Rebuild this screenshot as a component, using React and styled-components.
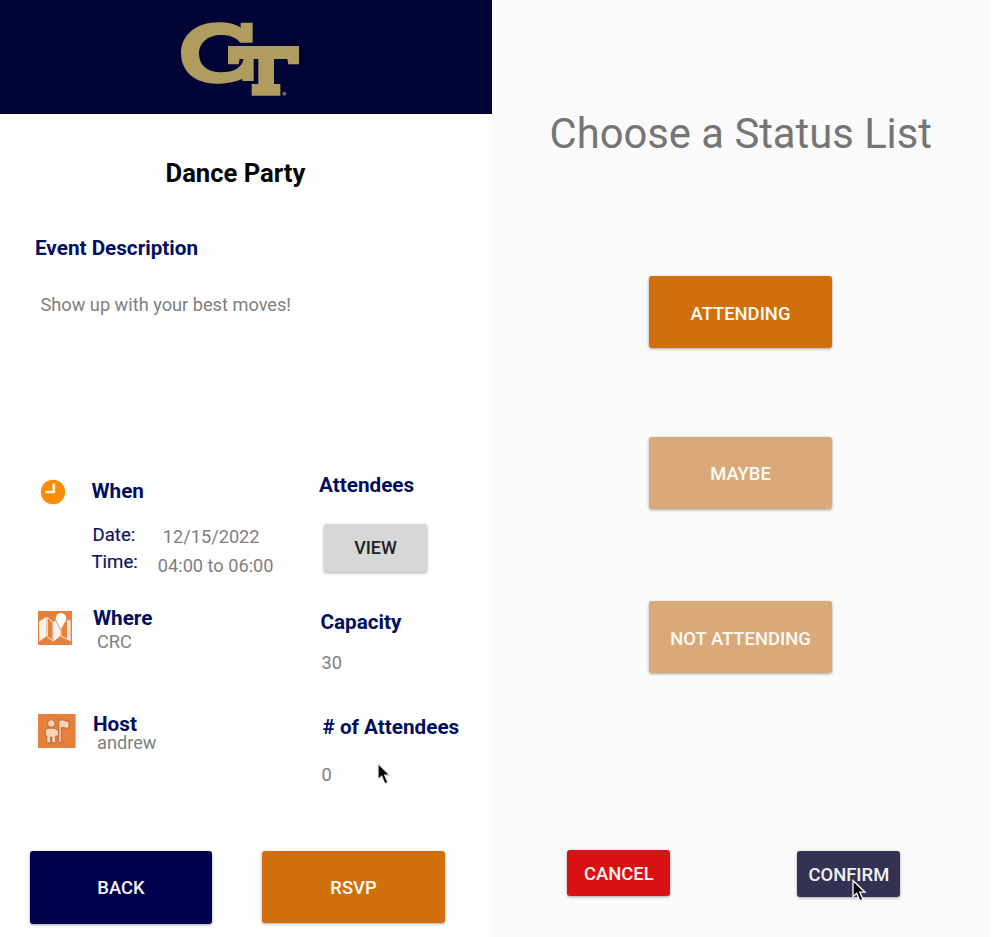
import React from 'react';
import styled, { createGlobalStyle, css } from 'styled-components';

const GlobalStyle = createGlobalStyle`
  * { box-sizing: border-box; }
  body { margin: 0; background: #fff; font-family: Roboto, "Liberation Sans", sans-serif; }
  p, h1, h2, h3 { margin: 0; }
`;

const Page = styled.div`
  position: relative;
  display: grid;
  grid-template-columns: 492px 499px;
  width: 992px;
  height: 937px;
  overflow: hidden;
`;

const EventScreen = styled.main`
  display: flex;
  flex-direction: column;
  background: #fefefe;
`;

const Banner = styled.header`
  height: 114px;
  padding: 10px 0 0 170px;
  background: #000536;
  border-bottom: 1px solid #00021f;
  svg { display: block; }
`;

const EventTitle = styled.h1`
  margin: 43px 0 0 165.5px;
  height: 31px;
  font-size: 25.6px;
  line-height: 32px;
  font-weight: 700;
  color: #050505;
`;

const Heading = styled.h2`
  font-size: 20.7px;
  line-height: 24px;
  font-weight: 700;
  color: #010f5d;
  white-space: nowrap;
`;

const Label = styled.span`
  font-size: 18.6px;
  line-height: 22px;
  color: #10145f;
  -webkit-text-stroke: 0.2px #10145f;
`;

const Value = styled.p`
  font-size: 18.2px;
  line-height: 22px;
  color: #808080;
  white-space: nowrap;
`;

const Description = styled.section`
  height: 288px;
  padding: 48px 0 0 35px;
  ${Value} { margin: 34px 0 0 5.5px; }
`;

const Details = styled.div`
  display: grid;
  grid-template-columns: 319px 1fr;
  height: 375px;
`;

const Column = styled.div`
  display: flex;
  flex-direction: column;
`;

const StatColumn = styled(Column)`
  margin-top: -3px;
`;

const Section = styled.section`
  display: grid;
  grid-template-columns: ${p => p.$text}px 1fr;
  align-items: start;
  height: ${p => p.$height}px;
  padding-top: ${p => p.$top}px;
`;

const IconSlot = styled.div`
  padding: ${p => p.$top}px 0 0 ${p => p.$left}px;
  svg { display: block; }
`;

const Answer = styled(Value)`
  margin: 1px 0 0 4px;
`;

const HostText = styled.div`
  padding-top: 3px;
  ${Heading} { line-height: 18px; }
  ${Answer} { margin-top: 1px; line-height: 18px; }
`;

const Schedule = styled.div`
  display: flex;
  gap: ${p => p.$gap}px;
  align-items: flex-end;
`;

const ScheduleGrid = styled.div`
  padding-top: 21px;
  ${Schedule}:first-child { padding-left: 1px; }
  ${Label} { align-self: flex-start; }
  ${Value} { padding-top: 2px; }
  ${Schedule} + ${Schedule} { margin-top: 3px; }
  ${Schedule} + ${Schedule} ${Value} { padding-top: 4px; }
`;

const Stat = styled.section`
  height: ${p => p.$height}px;
  padding-left: ${p => p.$left}px;
  ${Value} { margin: ${p => p.$gap}px 0 0 ${p => p.$indent}px; }
`;

const tones = {
  navy: css`background: #00004c; color: #f4f4f8;`,
  orange: css`background: #d0700d; color: #fffaf3;`,
  faded: css`background: #d9a979; color: #fdfaf6;`,
  grey: css`background: #d6d7d7; color: #202020;`,
  red: css`background: #d81213; color: #fff2f2;`,
  slate: css`background: #343252; color: #f3f3f7;`,
};

const Button = styled.button`
  display: flex;
  align-items: center;
  justify-content: center;
  flex: none;
  width: ${p => p.$width}px;
  height: ${p => p.$height}px;
  padding: ${p => p.$drop || 0}px 0 0;
  border: 0;
  border-radius: 3px;
  box-shadow: 0 1px 3px rgba(0, 0, 0, 0.35);
  font: 500 18.4px/22px Roboto, "Liberation Sans", sans-serif;
  white-space: nowrap;
  ${p => tones[p.$tone]}
`;

const ViewButton = styled(Button)`
  margin: 27px 0 0 5px;
  font-size: 18px;
`;

const Footer = styled.footer`
  display: flex;
  align-items: flex-start;
  gap: 50px;
  padding-left: 30px;
`;

const StatusScreen = styled.aside`
  display: flex;
  flex-direction: column;
  background: #fafafa;
`;

const StatusTitle = styled.h1`
  margin: 109px 0 0 57.5px;
  font-size: 41.75px;
  line-height: 50px;
  font-weight: 400;
  color: #757575;
  white-space: nowrap;
`;

const StatusOptions = styled.div`
  display: grid;
  grid-template-rows: 161px 164px 72px;
  align-items: start;
  margin: 117px 0 0 157px;
`;

const StatusActions = styled.div`
  display: flex;
  align-items: flex-start;
  gap: 127px;
  margin: 177px 0 0 75.4px;
  ${Button} + ${Button} { margin-top: 1px; }
`;

const Pointer = styled.svg`
  position: absolute;
  left: ${p => p.$x}px;
  top: ${p => p.$y}px;
`;

function Logo() {
  return (
    <svg width="140" height="103" viewBox="0 0 420 309" aria-label="GT">
      <g fill="#b09c5f">
        <path d="M212 38H248V98H211C198 83 180 75 155 75C112 75 87 99 87 132C87 165 112 187 153 187C192 187 215 173 221 147H251V213H217V206C196 216 170 221 137 221C75 221 33 184 33 130C33 76 77 37 147 37C174 37 195 42 212 53Z" />
        <path d="M174 108H387V163H355L352 147H312V222H331V257H245V222H265V147H209L206 163H174Z" />
        <circle cx="343" cy="251" r="6" opacity="0.65" />
      </g>
    </svg>
  );
}

function ClockIcon() {
  return (
    <svg width="26" height="26" viewBox="0 0 26 26">
      <circle cx="13" cy="13" r="12.2" fill="#fb8c08" />
      <path d="M13.8 4.6V13H5.4" fill="none" stroke="#fff3df" strokeWidth="2.7" />
    </svg>
  );
}

function MapIcon() {
  return (
    <svg width="34" height="34" viewBox="0 0 34 34">
      <rect width="34" height="34" fill="#e6803b" />
      <path d="M1.2 10.4L8.6 5.7V25.2L1.2 30.4Z" fill="#f5f3f1" />
      <path d="M9.4 6.6L15 11V30.2L9.4 25.6Z" fill="#e6803b" stroke="#efe6df" strokeWidth="1" />
      <path d="M15.4 11L22.4 6.5V25L15.4 30.4Z" fill="#f5f2ef" />
      <path d="M23 14L29.6 9.5V28.4L23 25Z" fill="#e6803b" stroke="#efe6df" strokeWidth="1" />
      <path d="M29 10.5L32.6 8.5V30.4L29 28.6Z" fill="#eee9e5" />
      <path d="M23 18.8L18.1 10A5.6 5.6 0 1 1 27.9 10Z" fill="#fff" stroke="#e6803b" strokeWidth="0.8" />
    </svg>
  );
}

function HostIcon() {
  return (
    <svg width="38" height="34" viewBox="0 0 38 34">
      <rect width="37.6" height="34" fill="#e6803b" />
      <g fill="#f9d2b2" stroke="#9f552b" strokeWidth="0.7" strokeLinejoin="round">
        <path d="M9.5 14.2H16.4L20.7 17V22H17.7V28.8H13.8V23H12.7V28.8H8.8V22H7.4V16Z" />
        <circle cx="13.3" cy="9.6" r="3.8" />
        <path d="M20.8 6.2H22.8C25.2 4.6 27.5 8.7 31 7V13.8C27.5 15.1 26 12.6 23.3 13.8V28.5H20.8Z" />
      </g>
    </svg>
  );
}

function Cursor({ x, y, outline }) {
  return (
    <Pointer $x={x} $y={y} width="18" height="25" viewBox="0 0 18 25">
      <path
        d="M2 1.5V17.6L5.7 14.3L8.8 21.8L12 20.4L8.8 13.2H14Z"
        fill="#050505"
        stroke={outline}
        strokeWidth="1.3"
      />
    </Pointer>
  );
}

export default function App() {
  return (
    <>
      <GlobalStyle />
      <Page>
        <EventScreen>
          <Banner><Logo /></Banner>
          <EventTitle>Dance Party</EventTitle>
          <Description>
            <Heading>Event Description</Heading>
            <Value>Show up with your best moves!</Value>
          </Description>
          <Details>
            <Column>
              <Section $text={91.5} $height={130} $top={3}>
                <IconSlot $top={0} $left={40}><ClockIcon /></IconSlot>
                <div>
                  <Heading>When</Heading>
                  <ScheduleGrid>
                    <Schedule $gap={27.5}><Label>Date:</Label><Value>12/15/2022</Value></Schedule>
                    <Schedule $gap={20}><Label>Time:</Label><Value>04:00 to 06:00</Value></Schedule>
                  </ScheduleGrid>
                </div>
              </Section>
              <Section $text={93} $height={106} $top={0}>
                <IconSlot $top={5} $left={38}><MapIcon /></IconSlot>
                <div>
                  <Heading>Where</Heading>
                  <Answer>CRC</Answer>
                </div>
              </Section>
              <Section $text={93} $height={100} $top={0}>
                <IconSlot $top={2} $left={38}><HostIcon /></IconSlot>
                <HostText>
                  <Heading>Host</Heading>
                  <Answer>andrew</Answer>
                </HostText>
              </Section>
            </Column>
            <StatColumn>
              <Stat $height={137} $left={0}>
                <Heading>Attendees</Heading>
                <ViewButton $tone="grey" $width={103} $height={48}>VIEW</ViewButton>
              </Stat>
              <Stat $height={105} $left={1.5} $gap={18} $indent={1}>
                <Heading>Capacity</Heading>
                <Value>30</Value>
              </Stat>
              <Stat $height={100} $left={3.5} $gap={25} $indent={-1}>
                <Heading># of Attendees</Heading>
                <Value>0</Value>
              </Stat>
            </StatColumn>
          </Details>
          <Footer>
            <Button $tone="navy" $width={182} $height={73}>BACK</Button>
            <Button $tone="orange" $width={183} $height={72} $drop={1}>RSVP</Button>
          </Footer>
        </EventScreen>
        <StatusScreen>
          <StatusTitle>Choose a Status List</StatusTitle>
          <StatusOptions>
            <Button $tone="orange" $width={183} $height={72} $drop={4}>ATTENDING</Button>
            <Button $tone="faded" $width={183} $height={72} $drop={2}>MAYBE</Button>
            <Button $tone="faded" $width={183} $height={72} $drop={4}>NOT ATTENDING</Button>
          </StatusOptions>
          <StatusActions>
            <Button $tone="red" $width={103} $height={46} $drop={1}>CANCEL</Button>
            <Button $tone="slate" $width={103} $height={46} $drop={1}>CONFIRM</Button>
          </StatusActions>
        </StatusScreen>
        <Cursor x={376} y={762} outline="#e9e9e9" />
        <Cursor x={851} y={879} outline="#fff" />
      </Page>
    </>
  );
}
